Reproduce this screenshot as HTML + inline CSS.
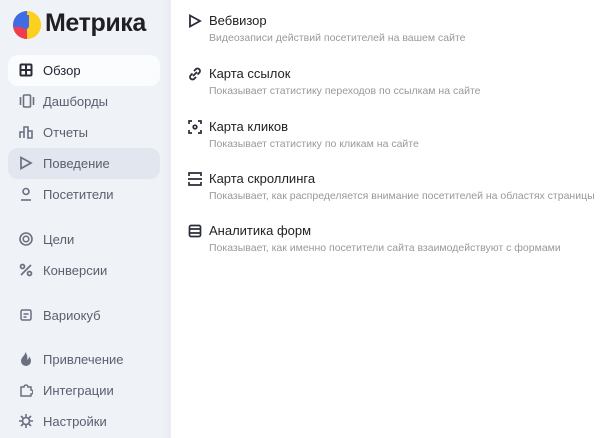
<!DOCTYPE html>
<html style="background:#fff"><head><meta charset="utf-8"><style>
*{margin:0;padding:0;box-sizing:border-box}
body{width:600px;height:438px;overflow:hidden;font-family:"Liberation Sans",sans-serif;background:#fff;position:relative}
.side{position:absolute;left:0;top:0;width:171px;height:438px;background:linear-gradient(90deg,#eff2f7 0,#eff2f7 160px,#e9ecf2 171px)}
.logo{position:absolute;left:13px;top:11px;width:28px;height:28px;border-radius:50%;overflow:hidden;background:#fcd01f}
.logo i{position:absolute}
.lt{position:absolute;left:45px;top:9px;font-size:25px;font-weight:bold;color:#1f1f24;letter-spacing:-0.4px}
.it{position:absolute;left:8px;width:152px;height:31px;border-radius:10px;font-size:13px;color:#5a5f6e;line-height:31px;padding-left:35px}
.it svg{position:absolute;left:11px;top:8px}
.act{background:#fbfcfd;color:#1f2230}
.sel{background:#e2e7ef}
.m{position:absolute;left:188px}
.m svg{position:absolute;left:0;top:1px}
.t{position:absolute;left:21px;top:0;font-size:13px;color:#222;white-space:nowrap}
.d{position:absolute;left:21px;top:19px;font-size:10.5px;color:#999;white-space:nowrap}
</style></head><body>
<div class="side">
<div class="logo"><i style="left:0;top:0;width:14px;height:28px;background:#3d6ce4"></i><i style="left:0;top:16px;width:14px;height:12px;background:#f23c4e"></i><i style="left:14px;top:0;width:14px;height:28px;background:#fcd01f"></i><i style="left:10px;top:4px;width:6px;height:14px;background:#3d6ce4;border-radius:0 0 3px 0"></i></div>
<div class="lt">Метрика</div>
<div class="it act" style="top:55px"><svg width="14" height="14" viewBox="0 0 14 14" fill="none" stroke="#2a2d38" stroke-width="2"><rect x="1.5" y="1.5" width="11" height="11" rx="1"/><path d="M7 1v12M1 7h12"/></svg>Обзор</div>
<div class="it" style="top:86px"><svg width="16" height="14" viewBox="0 0 16 14" fill="none" stroke="#6b7080" stroke-width="1.6"><rect x="4.5" y="1" width="7" height="12" rx="1"/><path d="M1.5 3v8M14.5 3v8"/></svg>Дашборды</div>
<div class="it" style="top:117px"><svg width="14" height="14" viewBox="0 0 14 14" fill="none" stroke="#6b7080" stroke-width="1.6"><path d="M1 13V7h4v6M5 13V2h4v11M9 13V6h4v7z"/></svg>Отчеты</div>
<div class="it sel" style="top:148px"><svg width="14" height="14" viewBox="0 0 14 14" fill="none" stroke="#6b7080" stroke-width="1.7"><path d="M2 1.5l10 5.5-10 5.5z"/></svg>Поведение</div>
<div class="it" style="top:179px"><svg width="14" height="14" viewBox="0 0 14 14" fill="none" stroke="#6b7080" stroke-width="1.6"><circle cx="7" cy="4.5" r="3"/><path d="M2 13h10"/></svg>Посетители</div>
<div class="it" style="top:224px"><svg width="14" height="14" viewBox="0 0 14 14" fill="none" stroke="#6b7080" stroke-width="1.6"><circle cx="7" cy="7" r="6"/><circle cx="7" cy="7" r="2.8"/></svg>Цели</div>
<div class="it" style="top:255px"><svg width="14" height="14" viewBox="0 0 14 14" fill="none" stroke="#6b7080" stroke-width="1.7"><circle cx="3.5" cy="3.5" r="2"/><circle cx="10.5" cy="10.5" r="2"/><path d="M12 2L2 12"/></svg>Конверсии</div>
<div class="it" style="top:300px"><svg width="14" height="14" viewBox="0 0 14 14" fill="none" stroke="#6b7080" stroke-width="1.5"><rect x="2" y="2" width="10" height="10" rx="1.5"/><path d="M4.5 6h5M4.5 9h3"/></svg>Вариокуб</div>
<div class="it" style="top:344px"><svg width="14" height="14" viewBox="0 0 14 14" fill="#6b7080"><path d="M6 0C7 3 2 5 2 9a5 5 0 0 0 10 0c0-2-1-3.5-2-4.5 0 2-1 3-2 3C9 5 8 2 6 0z"/></svg>Привлечение</div>
<div class="it" style="top:375px"><svg width="14" height="14" viewBox="0 0 14 14" fill="none" stroke="#6b7080" stroke-width="1.5"><path d="M2 13V4h3a2 2 0 0 1 4 0h3v3a2 2 0 0 1 0 4v2z"/></svg>Интеграции</div>
<div class="it" style="top:406px"><svg width="14" height="14" viewBox="0 0 14 14" fill="none" stroke="#6b7080" stroke-width="1.6"><circle cx="7" cy="7" r="3.5"/><path d="M7 0v3.5M7 10.5V14M0 7h3.5M10.5 7H14M2 2l2.5 2.5M9.5 9.5L12 12M12 2L9.5 4.5M4.5 9.5L2 12"/></svg>Настройки</div>
</div>
<div class="m" style="top:13px"><svg width="14" height="14" viewBox="0 0 14 14" fill="none" stroke="#2a2d38" stroke-width="1.8"><path d="M2 1.5l10 5.5-10 5.5z"/></svg><div class="t">Вебвизор</div><div class="d">Видеозаписи действий посетителей на вашем сайте</div></div>
<div class="m" style="top:66px"><svg width="14" height="14" viewBox="0 0 14 14" fill="none" stroke="#2a2d38" stroke-width="1.8"><path d="M6 4l2-2a2.5 2.5 0 0 1 3.5 3.5l-2 2M8 10l-2 2a2.5 2.5 0 0 1-3.5-3.5l2-2M5 9l4-4"/></svg><div class="t">Карта ссылок</div><div class="d">Показывает статистику переходов по ссылкам на сайте</div></div>
<div class="m" style="top:119px"><svg width="14" height="14" viewBox="0 0 14 14" fill="none" stroke="#2a2d38" stroke-width="1.7"><path d="M1 4V1h3M10 1h3v3M13 10v3h-3M4 13H1v-3"/><circle cx="7" cy="7" r="1.8"/></svg><div class="t">Карта кликов</div><div class="d">Показывает статистику по кликам на сайте</div></div>
<div class="m" style="top:171px"><svg width="14" height="14" viewBox="0 0 14 14" fill="none" stroke="#2a2d38" stroke-width="1.7"><path d="M1 4V1h12v3M1 10v3h12v-3M0 7h14"/></svg><div class="t">Карта скроллинга</div><div class="d">Показывает, как распределяется внимание посетителей на областях страницы</div></div>
<div class="m" style="top:223px"><svg width="14" height="14" viewBox="0 0 14 14" fill="none" stroke="#2a2d38" stroke-width="1.7"><rect x="1.5" y="1.5" width="11" height="11" rx="1.5"/><path d="M1.5 5h11M1.5 9h11"/></svg><div class="t">Аналитика форм</div><div class="d">Показывает, как именно посетители сайта взаимодействуют с формами</div></div>
</body></html>
